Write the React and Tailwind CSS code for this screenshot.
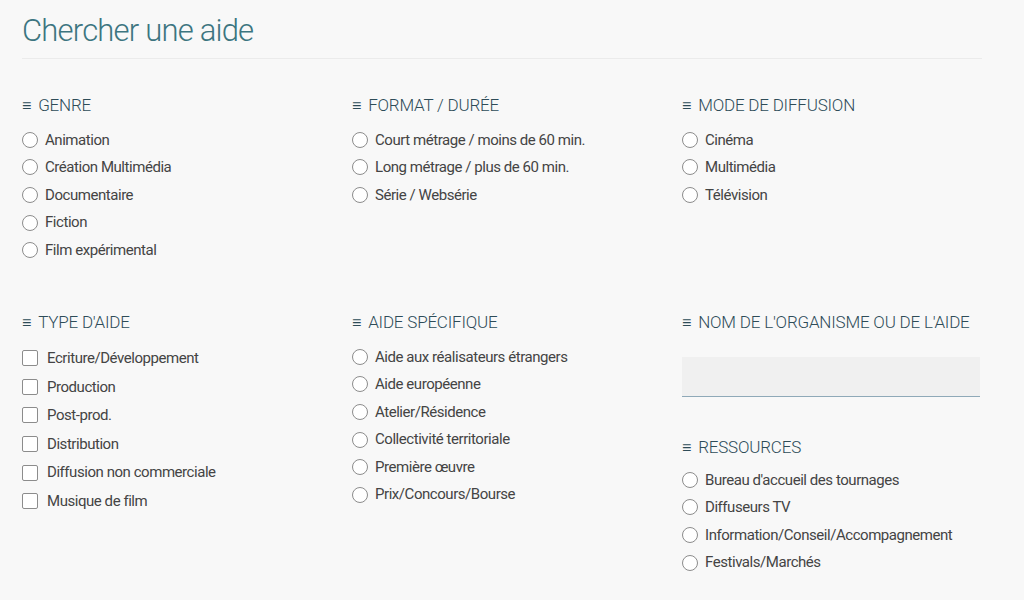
import React from "react";

const Radio = ({ label }) => (
  <div className="flex items-center h-[27.6px]">
    <span className="w-[16px] h-[16px] rounded-full border border-[#8c8c8c] bg-white shrink-0" />
    <span className="ml-[7px] text-[15px] tracking-[-0.45px] text-[#444]">{label}</span>
  </div>
);

const Check = ({ label }) => (
  <div className="flex items-center h-[28.6px]">
    <span className="w-[16px] h-[16px] rounded-[2px] border border-[#8c8c8c] bg-white shrink-0" />
    <span className="ml-[9px] text-[15px] tracking-[-0.45px] text-[#444]">{label}</span>
  </div>
);

const Heading = ({ children }) => (
  <div className="flex items-center h-[26px] whitespace-nowrap text-[17px] text-[#2e4c58] font-light tracking-[-0.2px]">
    <span className="mr-[7px] text-[16px] font-bold">≡</span>
    <span>{children}</span>
  </div>
);

const RadioGroup = ({ title, items, gap = "mt-[7px]" }) => (
  <div>
    <Heading>{title}</Heading>
    <div className={gap}>
      {items.map((i) => (
        <Radio key={i} label={i} />
      ))}
    </div>
  </div>
);

export default function App() {
  return (
    <div className="w-[1024px] h-[600px] bg-[#f8f8f8] overflow-hidden [font-family:Roboto,sans-serif]">
      <div className="px-[22px]">
        <h1 className="pt-[11px] text-[31px] leading-[40px] font-light tracking-[-0.8px] text-[#3c7580]">
          Chercher une aide
        </h1>
        <div className="mt-[7px] w-[960px] h-[1px] bg-[#ebebeb]" />
        <div className="grid grid-cols-[330px_330px_300px] mt-[34px]">
          <RadioGroup
            title="GENRE"
            items={["Animation", "Création Multimédia", "Documentaire", "Fiction", "Film expérimental"]}
          />
          <RadioGroup
            title="FORMAT / DURÉE"
            items={["Court métrage / moins de 60 min.", "Long métrage / plus de 60 min.", "Série / Websérie"]}
          />
          <RadioGroup title="MODE DE DIFFUSION" items={["Cinéma", "Multimédia", "Télévision"]} />
        </div>
        <div className="grid grid-cols-[330px_330px_300px] mt-[46px]">
          <div>
            <Heading>TYPE D'AIDE</Heading>
            <div className="mt-[8px]">
              {["Ecriture/Développement", "Production", "Post-prod.", "Distribution", "Diffusion non commerciale", "Musique de film"].map((i) => (
                <Check key={i} label={i} />
              ))}
            </div>
          </div>
          <RadioGroup
            title="AIDE SPÉCIFIQUE"
            items={["Aide aux réalisateurs étrangers", "Aide européenne", "Atelier/Résidence", "Collectivité territoriale", "Première œuvre", "Prix/Concours/Bourse"]}
          />
          <div>
            <Heading>NOM DE L'ORGANISME OU DE L'AIDE</Heading>
            <div className="mt-[21px] w-[298px] h-[40px] bg-[#f0f0f0] border-b border-[#8fa9b8]" />
            <div className="mt-[38px]">
              <RadioGroup
                title="RESSOURCES"
                gap="mt-[5px]"
                items={["Bureau d'accueil des tournages", "Diffuseurs TV", "Information/Conseil/Accompagnement", "Festivals/Marchés"]}
              />
            </div>
          </div>
        </div>
      </div>
    </div>
  );
}
